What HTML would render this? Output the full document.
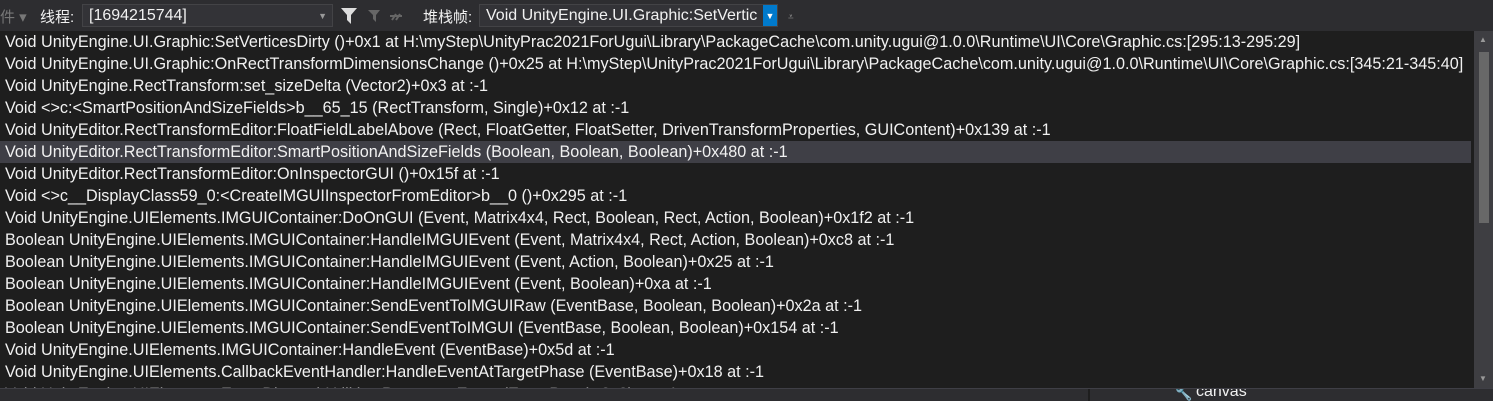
<!DOCTYPE html>
<html><head><meta charset="utf-8"><style>
body{margin:0;width:1493px;height:400px;background:#2d2d30;overflow:hidden;font-family:"Liberation Sans","Noto Sans CJK SC",sans-serif;color:#f1f1f1;position:relative}
.tb{position:absolute;top:0;left:0;width:1493px;height:31px;background:#2d2d30;font-size:15px}
.lbl{position:absolute;top:6px}
.box{position:absolute;background:#333337;border:1px solid #434346;height:23px;top:4px;line-height:22px;font-size:16px;padding-left:6px;box-sizing:border-box;overflow:hidden;white-space:nowrap}
.list{position:absolute;top:31px;left:0;width:1474px;height:357px;background:#1e1e1e;overflow:hidden}
.row{height:22px;line-height:22px;font-size:16.2px;padding-left:5px;white-space:nowrap;color:#f1f1f1}
.sel{background:#3f3f46;width:1466px}
.sb{position:absolute;top:31px;left:1474px;width:19px;height:357px;background:#3e3e42}
.thumb{position:absolute;left:5px;top:21px;width:10px;height:171px;background:#686868}
.bot{position:absolute;top:388px;left:0;width:1493px;height:12px;background:#2d2d30;border-top:1px solid #3f3f46;overflow:hidden}
</style></head><body>
<div class="tb">
<span class="lbl" style="left:0;color:#777">件 ▾</span>
<span class="lbl" style="left:40px">线程:</span>
<div class="box" style="left:82px;width:251px">[1694215744]<span style="position:absolute;right:5px;color:#999;font-size:9px">▼</span></div>
<svg style="position:absolute;left:340px;top:7px" width="80" height="18"><path d="M1 1h16l-6 7v9l-4-4V8z" fill="#ddd"/><path d="M28 3h12l-4 5v7l-3-3V8z" fill="#666"/><path d="M52 13l4-6M56 13l4-6M50 9h12" stroke="#666" stroke-width="2"/></svg>
<span class="lbl" style="left:423px">堆栈帧:</span>
<div class="box" style="left:479px;width:299px">Void UnityEngine.UI.Graphic:SetVertic<span style="position:absolute;right:0;top:0;width:14px;height:21px;background:#007acc;color:#fff;font-size:9px;text-align:center">▼</span></div>
<span style="position:absolute;left:788px;top:12px;color:#999;font-size:10px">⩡</span>
</div>
<div class="list">
<div class="row">Void UnityEngine.UI.Graphic:SetVerticesDirty ()+0x1 at H:\myStep\UnityPrac2021ForUgui\Library\PackageCache\com.unity.ugui@1.0.0\Runtime\UI\Core\Graphic.cs:[295:13-295:29]</div>
<div class="row">Void UnityEngine.UI.Graphic:OnRectTransformDimensionsChange ()+0x25 at H:\myStep\UnityPrac2021ForUgui\Library\PackageCache\com.unity.ugui@1.0.0\Runtime\UI\Core\Graphic.cs:[345:21-345:40]</div>
<div class="row">Void UnityEngine.RectTransform:set_sizeDelta (Vector2)+0x3 at :-1</div>
<div class="row">Void &lt;&gt;c:&lt;SmartPositionAndSizeFields&gt;b__65_15 (RectTransform, Single)+0x12 at :-1</div>
<div class="row">Void UnityEditor.RectTransformEditor:FloatFieldLabelAbove (Rect, FloatGetter, FloatSetter, DrivenTransformProperties, GUIContent)+0x139 at :-1</div>
<div class="row sel">Void UnityEditor.RectTransformEditor:SmartPositionAndSizeFields (Boolean, Boolean, Boolean)+0x480 at :-1</div>
<div class="row">Void UnityEditor.RectTransformEditor:OnInspectorGUI ()+0x15f at :-1</div>
<div class="row">Void &lt;&gt;c__DisplayClass59_0:&lt;CreateIMGUIInspectorFromEditor&gt;b__0 ()+0x295 at :-1</div>
<div class="row">Void UnityEngine.UIElements.IMGUIContainer:DoOnGUI (Event, Matrix4x4, Rect, Boolean, Rect, Action, Boolean)+0x1f2 at :-1</div>
<div class="row">Boolean UnityEngine.UIElements.IMGUIContainer:HandleIMGUIEvent (Event, Matrix4x4, Rect, Action, Boolean)+0xc8 at :-1</div>
<div class="row">Boolean UnityEngine.UIElements.IMGUIContainer:HandleIMGUIEvent (Event, Action, Boolean)+0x25 at :-1</div>
<div class="row">Boolean UnityEngine.UIElements.IMGUIContainer:HandleIMGUIEvent (Event, Boolean)+0xa at :-1</div>
<div class="row">Boolean UnityEngine.UIElements.IMGUIContainer:SendEventToIMGUIRaw (EventBase, Boolean, Boolean)+0x2a at :-1</div>
<div class="row">Boolean UnityEngine.UIElements.IMGUIContainer:SendEventToIMGUI (EventBase, Boolean, Boolean)+0x154 at :-1</div>
<div class="row">Void UnityEngine.UIElements.IMGUIContainer:HandleEvent (EventBase)+0x5d at :-1</div>
<div class="row">Void UnityEngine.UIElements.CallbackEventHandler:HandleEventAtTargetPhase (EventBase)+0x18 at :-1</div>
<div class="row" style="color:#888">Void UnityEngine.UIElements.EventDispatchUtilities:PropagateEvent (EventBase)+0x6b at :-1</div>
</div>
<div class="sb"><span style="position:absolute;left:5px;top:4px;color:#999;font-size:8px">▲</span><div class="thumb"></div><span style="position:absolute;left:5px;top:343px;color:#999;font-size:8px">▼</span></div>
<div class="bot"><div style="position:absolute;left:1088px;top:0;width:2px;height:12px;background:#1e1e1e"></div><span style="position:absolute;left:1175px;top:-4px;font-size:14px;color:#ccc">🔧</span><span style="position:absolute;left:1196px;top:-6px;font-size:16px">canvas</span></div>
</body></html>
